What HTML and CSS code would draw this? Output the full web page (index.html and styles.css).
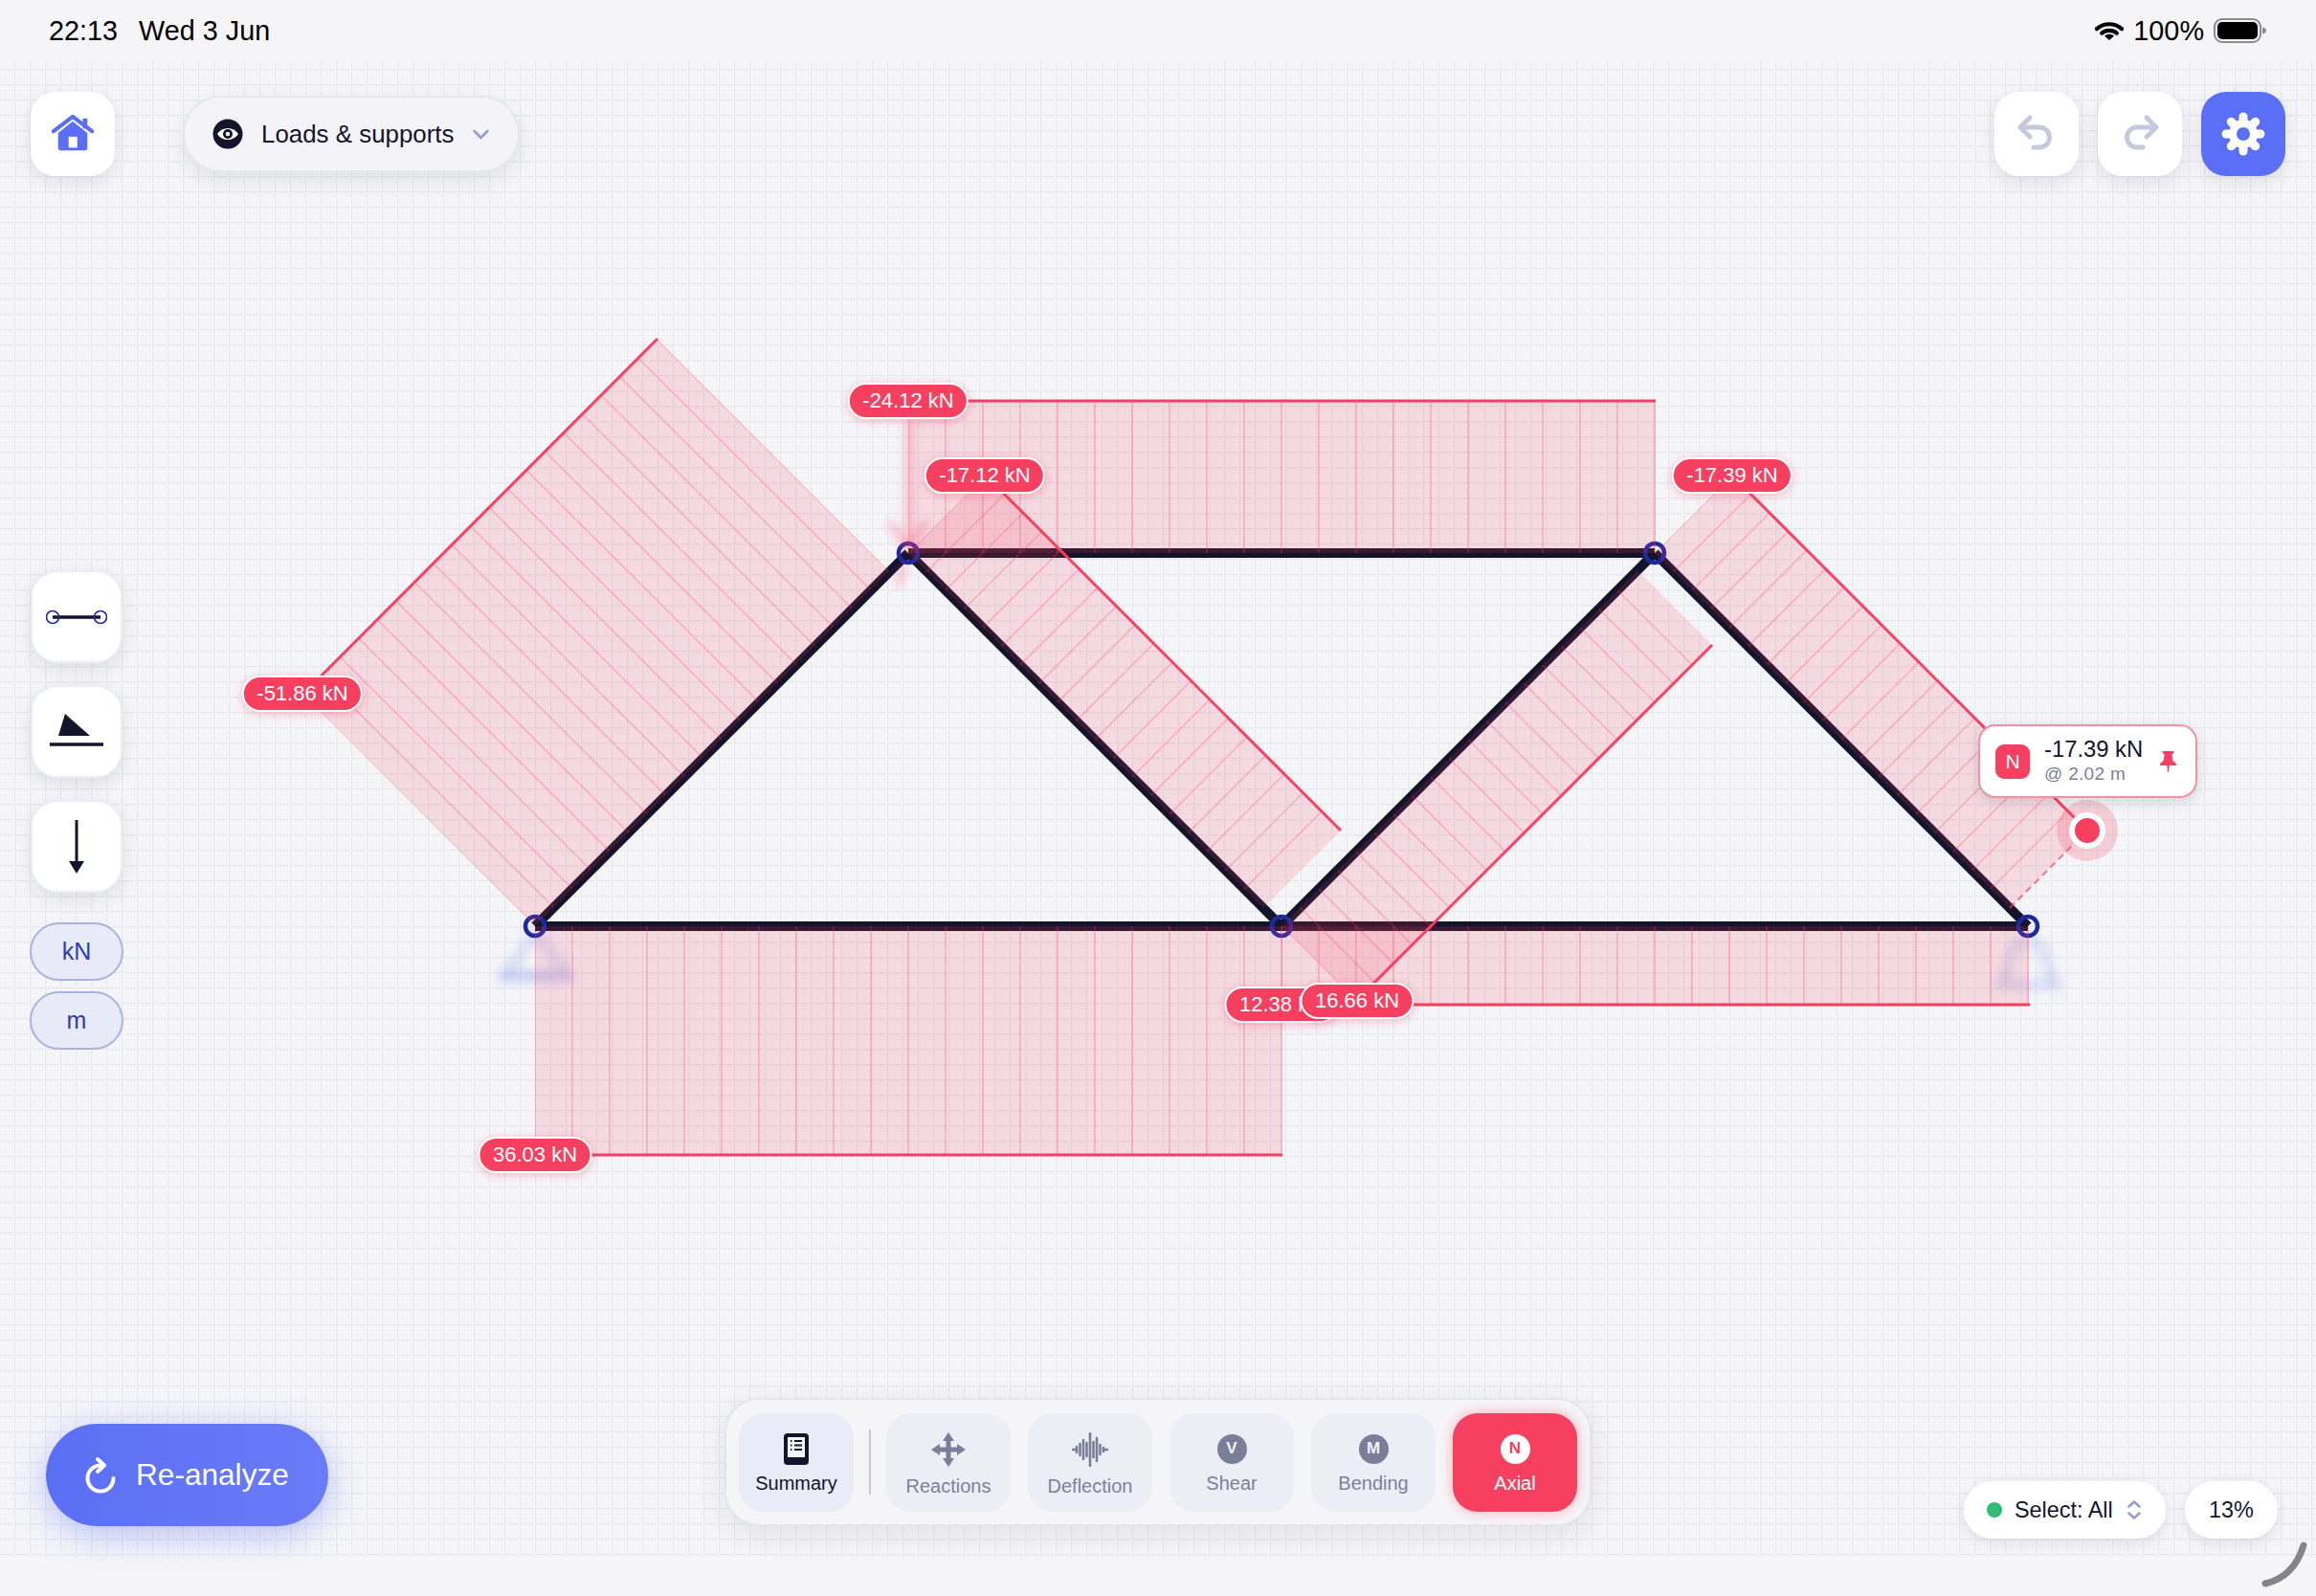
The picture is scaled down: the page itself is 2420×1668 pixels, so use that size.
FILE: index.html
```html
<!DOCTYPE html>
<html lang="en">
<head>
<meta charset="utf-8">
<title>Truss analysis</title>
<link rel="stylesheet" href="styles.css">
</head>
<body>
<div class="screen">
  <header class="status">
    <span class="time">22:13</span>
    <span class="date">Wed 3 Jun</span>
    <div class="status-right">
      <svg class="wifi" viewBox="0 0 30 20" width="30" height="20"><path class="wifi-arc" d="M2 8.200C9.500 1.600 20.500 1.600 28 8.200"/><path class="wifi-arc" d="M7.200 12.600C11.600 9 18.400 9 22.800 12.600"/><path class="wifi-dot" d="M15 20l-5-4.600c2.900-2.200 7.100-2.200 10 0z"/></svg>
      <span class="battery-text">100%</span>
      <svg class="battery" viewBox="0 0 55 26" width="55" height="26"><rect class="bat-shell" x="1" y="1" width="48" height="24" rx="8"/><rect class="bat-fill" x="4" y="4" width="42" height="18" rx="5"/><path class="bat-nub" d="M51 9.500c2.500.6 4 1.800 4 3.500s-1.500 2.900-4 3.500z"/></svg>
    </div>
  </header>

  <main class="canvas">
    <svg class="diagram" viewBox="0 64 2420 1564" width="2420" height="1564">
      <defs>
        <filter id="soft" x="-50%" y="-50%" width="200%" height="200%"><feGaussianBlur stdDeviation="6"/></filter>
        <filter id="softer" x="-50%" y="-50%" width="200%" height="200%"><feGaussianBlur stdDeviation="4"/></filter>
      </defs>

      <g class="support" filter="url(#soft)">
        <path d="M559 975L527 1020H595z"/>
        <path d="M522 1020H595"/>
      </g>
      <g class="support" filter="url(#soft)">
        <path d="M2105 985L2092 1028M2133 985L2146 1028M2105 985H2133"/>
        <path d="M2085 1029H2155"/>
      </g>

      <g class="members">
        <line x1="559" y1="968" x2="949" y2="578"/>
        <line x1="949" y1="578" x2="1339" y2="968"/>
        <line x1="1339" y1="968" x2="1729" y2="578"/>
        <line x1="1729" y1="578" x2="2119" y2="968"/>
        <line x1="949" y1="578" x2="1729" y2="578"/>
        <line x1="559" y1="968" x2="2119" y2="968"/>
      </g>
      <g class="nodes">
        <circle cx="559" cy="968" r="10"/>
        <circle cx="949" cy="578" r="10"/>
        <circle cx="1339" cy="968" r="10"/>
        <circle cx="1729" cy="578" r="10"/>
        <circle cx="2119" cy="968" r="10"/>
      </g>

      <g class="smudge" filter="url(#softer)">
        <path d="M949 440V576"/>
        <path d="M930 545L947 572M968 545L951 572M938 612L945 590"/>
      </g>

      <g class="fills">
        <polygon points="687,354 929,597 559,968 317,725"/>
        <polygon points="949,578 1030,497 1401,868 1320,949"/>
        <polygon points="1339,968 1417,1046 1789,674 1711,596"/>
        <polygon points="1729,578 1810,497 2181,868 2100,949"/>
        <rect x="949" y="419" width="781" height="159"/>
        <rect x="559" y="968" width="781" height="239"/>
        <rect x="1339" y="968" width="781" height="82"/>
      </g>

      <g class="hatch-diag">
        <line x1="437.500" y1="846.500" x2="807.500" y2="475.500" stroke-width="343"/>
        <line x1="989.500" y1="537.500" x2="1359" y2="907" stroke-width="114.500"/>
        <line x1="1378" y1="1007" x2="1748" y2="637" stroke-width="110.300"/>
        <line x1="1769.500" y1="537.500" x2="2139" y2="907" stroke-width="114.500"/>
      </g>
      <g class="hatch-flat">
        <line x1="949" y1="498.500" x2="1731" y2="498.500" stroke-width="159"/>
        <line x1="559" y1="1087.500" x2="1341" y2="1087.500" stroke-width="239"/>
        <line x1="1339" y1="1009" x2="2121" y2="1009" stroke-width="82"/>
      </g>

      <g class="edges">
        <line x1="687" y1="354" x2="317" y2="725"/>
        <line x1="1030" y1="497" x2="1401" y2="868"/>
        <line x1="1417" y1="1046" x2="1789" y2="674"/>
        <line x1="1810" y1="497" x2="2181" y2="868"/>
        <line x1="949" y1="419" x2="1730" y2="419"/>
        <line x1="559" y1="1207" x2="1340" y2="1207"/>
        <line x1="1339" y1="1050" x2="2121" y2="1050"/>
      </g>
      <line class="cursor-line" x1="2100" y1="949" x2="2181" y2="868"/>

      <circle class="marker-halo" cx="2181" cy="868" r="32"/>
      <circle class="marker-ring" cx="2181" cy="868" r="19"/>
      <circle class="marker-dot" cx="2181" cy="868" r="13"/>
    </svg>

    <span class="value lb-ab">-51.86 kN</span>
    <span class="value lb-bd">-24.12 kN</span>
    <span class="value lb-bc">-17.12 kN</span>
    <span class="value lb-de">-17.39 kN</span>
    <span class="value lb-ac">36.03 kN</span>
    <span class="value lb-ce">12.38 kN</span>
    <span class="value lb-cd">16.66 kN</span>

    <div class="readout">
      <span class="readout-badge">N</span>
      <div class="readout-text">
        <span class="readout-value">-17.39 kN</span>
        <span class="readout-pos">@ 2.02 m</span>
      </div>
      <svg class="pin" viewBox="0 0 20 26" width="17" height="24"><path d="M3 0h14v1.800l-2.500 3 1.300 7 4.200 3.700v2.200h-8.500l-1 8.300h-1l-1-8.300H0v-2.200l4.200-3.700 1.300-7L3 1.800z"/></svg>
    </div>

    <div class="hud">
      <div class="hud-top">
        <button class="square">
          <svg viewBox="0 0 48 44" width="46" height="42"><path class="home-body" d="M8 21L24 8l16 13v16a3 3 0 0 1-3 3H11a3 3 0 0 1-3-3z"/><rect class="home-body" x="35" y="5" width="5" height="11"/><path class="home-roof" d="M3 19L24 3l21 16"/><rect class="home-door" x="19.500" y="25" width="9.500" height="12"/></svg>
        </button>
        <button class="view-pill">
          <svg viewBox="0 0 32 32" width="32" height="32"><circle class="eye-bg" cx="16" cy="16" r="15.500"/><path class="eye-white" d="M5 16c5-8 17-8 22 0-5 8-17 8-22 0z"/><circle class="eye-bg" cx="16" cy="16" r="5"/><circle class="eye-white" cx="16" cy="16" r="2.200"/></svg>
          <span>Loads &amp; supports</span>
          <svg class="chev" viewBox="0 0 20 12" width="17" height="11"><path d="M2 2l8 8 8-8"/></svg>
        </button>
        <div class="actions">
          <button class="square">
            <svg class="hist" viewBox="0 0 44 44" width="44" height="44"><path d="M15 5L5 15l10 10M5 15h20a10.500 10.500 0 0 1 0 21h-6"/></svg>
          </button>
          <button class="square">
            <svg class="hist" viewBox="0 0 44 44" width="44" height="44"><path d="M29 5l10 10-10 10M39 15H19a10.500 10.500 0 0 0 0 21h6"/></svg>
          </button>
          <button class="square square-primary">
            <svg class="gear" viewBox="0 0 48 48" width="48" height="48"><g class="gear-teeth"><line x1="24" y1="6" x2="24" y2="42"/><line x1="6" y1="24" x2="42" y2="24"/><line x1="11.300" y1="11.300" x2="36.700" y2="36.700"/><line x1="36.700" y1="11.300" x2="11.300" y2="36.700"/></g><circle class="gear-disc" cx="24" cy="24" r="15"/><circle class="gear-hole" cx="24" cy="24" r="7"/></svg>
          </button>
        </div>
      </div>

      <nav class="tools">
        <button class="tool">
          <svg viewBox="0 0 64 24" width="64" height="24"><line class="tool-line" x1="7" y1="12" x2="57" y2="12"/><circle class="tool-node" cx="7" cy="12" r="6.500"/><circle class="tool-node" cx="57" cy="12" r="6.500"/></svg>
        </button>
        <button class="tool">
          <svg viewBox="0 0 60 40" width="60" height="40"><path class="tool-solid" d="M18 1L11 24h33z"/><line class="tool-line" x1="2" y1="33" x2="58" y2="33"/></svg>
        </button>
        <button class="tool">
          <svg viewBox="0 0 20 58" width="20" height="58"><line class="tool-thin" x1="10" y1="1" x2="10" y2="46"/><path class="tool-solid" d="M2 44h16l-8 13z"/></svg>
        </button>
        <span class="unit">kN</span>
        <span class="unit">m</span>
      </nav>

      <div class="hud-bottom">
        <button class="analyze">
          <svg viewBox="0 0 36 42" width="36" height="42"><path d="M31.500 24A13.500 13.500 0 1 1 18 10.500M15 4l7 6.500L15 17"/></svg>
          <span>Re-analyze</span>
        </button>

        <div class="tabbar">
          <button class="tab tab-summary">
            <svg viewBox="0 0 26 33" width="26" height="33"><rect class="book" x="0" y="0" width="26" height="33" rx="4"/><rect class="book-page" x="4" y="4" width="18" height="21"/><path class="book-lines" d="M7 8h1.500M11 8h8M7 12.500h1.500M11 12.500h8M7 17h1.500M11 17h8"/></svg>
            <span>Summary</span>
          </button>
          <span class="divider"></span>
          <button class="tab tab-low">
            <svg viewBox="0 0 36 36" width="36" height="36"><path class="glyph" d="M18 0l6 9h-3.500v6.500H27V12l9 6-9 6v-3.500h-6.500V27H24l-6 9-6-9h3.500v-6.500H9V24l-9-6 9-6v3.500h6.500V9H12z"/></svg>
            <span>Reactions</span>
          </button>
          <button class="tab tab-low">
            <svg class="wave" viewBox="0 0 38 36" width="38" height="36"><path d="M1 18h3M5 15v6M8.500 12v12M12 8v20M15.500 11v14M19 1v34M22.500 10v16M26 6v24M29.500 13v10M33 16v4M34 18h3"/></svg>
            <span>Deflection</span>
          </button>
          <button class="tab tab-badge">
            <span class="circle">V</span>
            <span>Shear</span>
          </button>
          <button class="tab tab-badge">
            <span class="circle">M</span>
            <span>Bending</span>
          </button>
          <button class="tab tab-badge tab-active">
            <span class="circle">N</span>
            <span>Axial</span>
          </button>
        </div>

        <div class="select-pill">
          <span class="dot"></span>
          <span>Select: All</span>
          <svg class="updown" viewBox="0 0 14 20" width="14" height="20"><path d="M1.500 6.500L7 1.500l5.500 5M1.500 13.500l5.500 5 5.500-5"/></svg>
        </div>
        <div class="zoom-pill">13%</div>
      </div>
    </div>
  </main>

  <svg class="corner" viewBox="0 0 50 50" width="50" height="50"><path d="M44 5C38 25 26 40 4 45"/></svg>
</div>
</body>
</html>
```

FILE: styles.css
```css
* { box-sizing: border-box; }

html, body {
  margin: 0;
  padding: 0;
  background: #f5f5f8;
}

body {
  font-family: "Liberation Sans", Arial, sans-serif;
  color: #14142a;
}

button {
  font: inherit;
  color: inherit;
  border: 0;
  padding: 0;
  background: none;
}

.screen {
  position: relative;
  width: 2420px;
  height: 1668px;
  overflow: hidden;
  display: flex;
  flex-direction: column;
  background: #f5f5f8;
}

/* status bar */
.status {
  height: 64px;
  flex: none;
  display: flex;
  align-items: center;
  gap: 22px;
  padding: 0 52px 0 51px;
  font-size: 28.8px;
  color: #000;
}

.status-right {
  margin-left: auto;
  display: flex;
  align-items: center;
  gap: 10px;
}

.wifi-arc { fill: none; stroke: #000; stroke-width: 4.2; stroke-linecap: round; }
.wifi-dot { fill: #000; }
.bat-shell { fill: none; stroke: #8c8c8c; stroke-width: 2; }
.bat-fill { fill: #000; }
.bat-nub { fill: #8c8c8c; }

/* canvas */
.canvas {
  position: relative;
  height: 1564px;
  flex: none;
  background-color: #f5f5f8;
  background-image:
    linear-gradient(#e6e8ef 0 1px, #f0f1f5 1px 2px, transparent 2px),
    linear-gradient(90deg, #e6e8ef 0 1px, #f0f1f5 1px 2px, transparent 2px);
  background-size: 16px 16px;
  background-position: 15px 8px;
}

.diagram {
  position: absolute;
  left: 0;
  top: 0;
  display: block;
}

.members line { stroke: #14142a; stroke-width: 10; }
.nodes circle { fill: none; stroke: #1d2a9e; stroke-width: 4.5; }
.fills polygon, .fills rect { fill: #f73f60; fill-opacity: 0.15; }

.hatch-diag line {
  stroke: #f73f60;
  stroke-opacity: 0.24;
  stroke-dasharray: 1.8 25.78;
  stroke-dashoffset: 0.9;
}

.hatch-flat line {
  stroke: #f73f60;
  stroke-opacity: 0.24;
  stroke-dasharray: 2 37;
  stroke-dashoffset: 1;
}

.edges line { stroke: #f73f60; stroke-width: 3; }
.cursor-line { stroke: #f73f60; stroke-opacity: 0.7; stroke-width: 2; stroke-dasharray: 7 5; }

.support path { fill: none; stroke: #5f73e6; stroke-opacity: 0.24; stroke-width: 9; }
.smudge path { fill: none; stroke: #f73f60; stroke-opacity: 0.26; stroke-width: 9; }

.marker-halo { fill: #f73f60; fill-opacity: 0.22; }
.marker-ring { fill: #fff; }
.marker-dot { fill: #f73f60; }

/* values pinned to the diagram */
.value {
  position: absolute;
  height: 38px;
  padding: 0 13.5px;
  display: flex;
  align-items: center;
  white-space: nowrap;
  transform: translate(-50%, -50%);
  border: 2px solid #fff;
  border-radius: 19px;
  background: #f73f60;
  color: #fff;
  font-size: 22px;
  box-shadow: 0 2px 10px rgba(247, 63, 96, 0.35);
}

.lb-ab { left: 316px; top: 661px; }
.lb-bd { left: 949px; top: 355px; }
.lb-bc { left: 1029px; top: 433px; }
.lb-de { left: 1810px; top: 433px; }
.lb-ac { left: 559px; top: 1143px; }
.lb-ce { left: 1339px; top: 986px; }
.lb-cd { left: 1418px; top: 982px; }

/* readout tooltip */
.readout {
  position: absolute;
  left: 2067px;
  top: 693px;
  width: 229px;
  height: 77px;
  display: flex;
  align-items: center;
  padding: 0 20px 0 16px;
  background: #fff;
  border: 2px solid #f2919f;
  border-radius: 18px;
  box-shadow: 0 4px 14px rgba(30, 30, 60, 0.14);
}

.readout-badge {
  width: 36px;
  height: 36px;
  flex: none;
  display: flex;
  align-items: center;
  justify-content: center;
  border-radius: 9px;
  background: #f73f60;
  color: #fff;
  font-size: 21px;
}

.readout-text {
  margin-left: 15px;
  margin-top: -2px;
  display: flex;
  flex-direction: column;
  gap: 2px;
}

.readout-value { font-size: 23.8px; line-height: 26px; white-space: nowrap; }
.readout-pos { font-size: 19px; line-height: 21px; color: #7e8099; letter-spacing: 0.3px; white-space: nowrap; }
.pin { margin-left: auto; fill: #f73f60; }

/* overlay controls */
.hud {
  position: absolute;
  inset: 0;
  display: flex;
  flex-direction: column;
  padding: 32px 32px 33px;
}

.hud-top {
  display: flex;
  align-items: flex-start;
}

.square {
  width: 88px;
  height: 88px;
  flex: none;
  display: flex;
  align-items: center;
  justify-content: center;
  background: #fff;
  border-radius: 26px;
  box-shadow: 0 6px 18px rgba(30, 30, 60, 0.1);
}

.square-primary { background: #5a6ff5; }

.home-body { fill: #5a6ff5; }
.home-roof { fill: none; stroke: #5a6ff5; stroke-width: 4.5; stroke-linecap: round; stroke-linejoin: round; }
.home-door { fill: #fff; }

.view-pill {
  margin-left: 71px;
  margin-top: 4px;
  width: 352px;
  height: 80px;
  display: flex;
  align-items: center;
  padding-left: 29px;
  gap: 19px;
  background: #f4f4f8;
  border: 2px solid #e5e7ef;
  border-radius: 40px;
  font-size: 25.9px;
  box-shadow: 0 8px 20px rgba(30, 30, 60, 0.09);
}

.eye-bg { fill: #14142a; }
.eye-white { fill: #fff; }
.chev { fill: none; stroke: #9a9dcd; stroke-width: 3.4; stroke-linecap: round; stroke-linejoin: round; }

.actions {
  margin-left: auto;
  display: flex;
  gap: 20px;
}

.hist { fill: none; stroke: #c6c9dd; stroke-width: 5; stroke-linecap: round; stroke-linejoin: round; }
.gear-teeth line { stroke: #fff; stroke-width: 9; stroke-linecap: round; }
.gear-disc { fill: #fff; }
.gear-hole { fill: #5a6ff5; }

.tools {
  margin-top: 412px;
  margin-left: -1px;
  width: 98px;
  display: flex;
  flex-direction: column;
  align-items: center;
}

.tool {
  width: 96px;
  height: 97px;
  margin-bottom: 23px;
  display: flex;
  align-items: center;
  justify-content: center;
  background: #fff;
  border: 2px solid #eceef6;
  border-radius: 28px;
  box-shadow: 0 6px 18px rgba(30, 30, 60, 0.1);
}

.tool-line { stroke: #14142a; stroke-width: 3.4; }
.tool-thin { stroke: #14142a; stroke-width: 3; }
.tool-node { fill: none; stroke: #1d2a9e; stroke-width: 1.6; }
.tool-solid { fill: #14142a; }

.unit {
  width: 98px;
  height: 61px;
  margin-bottom: 11px;
  display: flex;
  align-items: center;
  justify-content: center;
  background: #e8eaf7;
  border: 2.5px solid #aab2e3;
  border-radius: 31px;
  color: #2b3bb5;
  font-size: 25px;
}

.tool + .unit { margin-top: 8px; }

.hud-bottom {
  margin-top: auto;
  display: flex;
  align-items: flex-end;
}

.analyze {
  width: 295px;
  height: 107px;
  margin-left: 16px;
  flex: none;
  display: flex;
  align-items: center;
  padding-left: 39px;
  gap: 19px;
  border-radius: 54px;
  background: linear-gradient(90deg, #5a6ff5, #6a7bf7);
  color: #fff;
  font-size: 31.6px;
  box-shadow: 0 8px 36px rgba(90, 111, 245, 0.4);
}

.analyze svg { fill: none; stroke: #fff; stroke-width: 4; stroke-linecap: round; stroke-linejoin: round; }

.tabbar {
  width: 906px;
  height: 134px;
  margin-left: 414px;
  flex: none;
  display: flex;
  align-items: center;
  gap: 18px;
  padding: 0 13px;
  background: #f5f5f8;
  border: 2px solid #e3e5ed;
  border-radius: 36px;
  box-shadow: 0 8px 30px rgba(30, 30, 60, 0.09);
}

.tab {
  width: 130px;
  height: 103px;
  flex: none;
  display: flex;
  flex-direction: column;
  align-items: center;
  gap: 7px;
  padding-top: 20px;
  border-radius: 26px;
  background: #eceef6;
  color: #7e8099;
  font-size: 20px;
  line-height: 24px;
}

.tab-summary {
  width: 120px;
  background: #e9ebf6;
  color: #14142a;
  padding-top: 21px;
}

.tab-low { gap: 8px; }
.tab-badge { gap: 8px; padding-top: 22px; }

.tab-active {
  background: #f73f60;
  color: #fff;
  box-shadow: 0 0 14px rgba(247, 63, 96, 0.4);
}

.divider {
  width: 2px;
  height: 68px;
  flex: none;
  margin: 0 -2px;
  background: #c8c9d0;
}

.book { fill: #14142a; }
.book-page { fill: #f5f5fa; }
.book-lines { fill: none; stroke: #14142a; stroke-width: 2; }
.glyph { fill: #7b7e98; }
.wave { fill: none; stroke: #7b7e98; stroke-width: 2.6; stroke-linecap: round; }

.circle {
  width: 31px;
  height: 31px;
  display: flex;
  align-items: center;
  justify-content: center;
  border-radius: 50%;
  background: #7b7e98;
  color: #f2f3fa;
  font-size: 17px;
  font-weight: 700;
}

.tab-active .circle { background: #fff; color: #f73f60; }

.select-pill, .zoom-pill {
  height: 60px;
  flex: none;
  display: flex;
  align-items: center;
  margin-bottom: -13px;
  background: #fff;
  border-radius: 30px;
  font-size: 23.4px;
  box-shadow: 0 4px 14px rgba(30, 30, 60, 0.1);
}

.select-pill {
  width: 211px;
  margin-left: 389px;
  padding-left: 24px;
  gap: 13px;
}

.dot {
  width: 16px;
  height: 16px;
  flex: none;
  border-radius: 50%;
  background: #2fbd73;
}

.updown { margin-left: 2px; fill: none; stroke: #9a9dcd; stroke-width: 2.6; stroke-linecap: round; stroke-linejoin: round; }

.zoom-pill {
  width: 97px;
  margin-left: 20px;
  justify-content: center;
}

.corner {
  position: absolute;
  left: 2363px;
  top: 1610px;
  fill: none;
  stroke: #858585;
  stroke-width: 7;
  stroke-linecap: round;
}
```
